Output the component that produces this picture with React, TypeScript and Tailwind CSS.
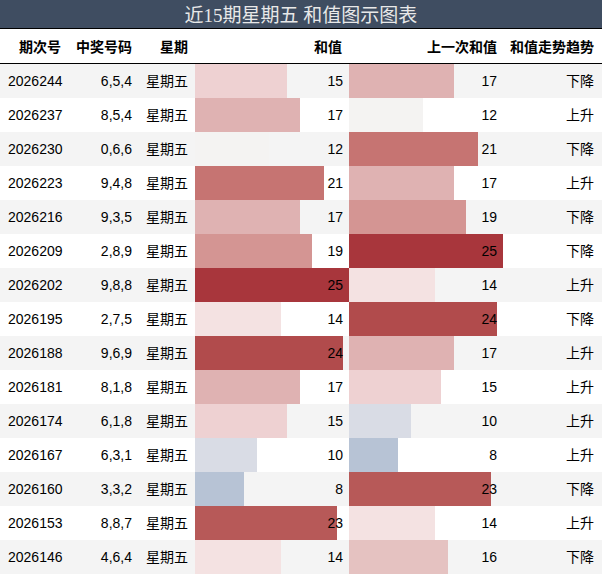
type Row = {
  issue: string;
  nums: string;
  sum: number;
  prev: number;
  trend: "上升" | "下降";
};

const ROWS: Row[] = [
  { issue: "2026244", nums: "6,5,4", sum: 15, prev: 17, trend: "下降" },
  { issue: "2026237", nums: "8,5,4", sum: 17, prev: 12, trend: "上升" },
  { issue: "2026230", nums: "0,6,6", sum: 12, prev: 21, trend: "下降" },
  { issue: "2026223", nums: "9,4,8", sum: 21, prev: 17, trend: "上升" },
  { issue: "2026216", nums: "9,3,5", sum: 17, prev: 19, trend: "下降" },
  { issue: "2026209", nums: "2,8,9", sum: 19, prev: 25, trend: "下降" },
  { issue: "2026202", nums: "9,8,8", sum: 25, prev: 14, trend: "上升" },
  { issue: "2026195", nums: "2,7,5", sum: 14, prev: 24, trend: "下降" },
  { issue: "2026188", nums: "9,6,9", sum: 24, prev: 17, trend: "上升" },
  { issue: "2026181", nums: "8,1,8", sum: 17, prev: 15, trend: "上升" },
  { issue: "2026174", nums: "6,1,8", sum: 15, prev: 10, trend: "上升" },
  { issue: "2026167", nums: "6,3,1", sum: 10, prev: 8, trend: "上升" },
  { issue: "2026160", nums: "3,3,2", sum: 8, prev: 23, trend: "下降" },
  { issue: "2026153", nums: "8,8,7", sum: 23, prev: 14, trend: "上升" },
  { issue: "2026146", nums: "4,6,4", sum: 14, prev: 16, trend: "下降" },
];

// colour scale per value (blue-ish low, red high)
const BAR_COLOR: Record<number, string> = {
  8: "bg-[#b7c3d5]",
  10: "bg-[#d9dce5]",
  12: "bg-[#f4f3f2]",
  14: "bg-[#f4e2e2]",
  15: "bg-[#eed1d2]",
  16: "bg-[#e5c2c1]",
  17: "bg-[#dfb2b2]",
  19: "bg-[#d49593]",
  21: "bg-[#c67472]",
  23: "bg-[#b75958]",
  24: "bg-[#b14b4c]",
  25: "bg-[#a8363c]",
};

const MAX = 25;
const GRID = "grid grid-cols-[69px_70px_56px_154px_154px_99px]";

function BarCell({ value }: { value: number }) {
  return (
    <div className="relative flex items-center justify-end pr-[6px]">
      <div
        className={`absolute inset-y-0 left-0 ${BAR_COLOR[value]}`}
        style={{ width: `${(value / MAX) * 100}%` }}
      />
      <span className="relative">{value}</span>
    </div>
  );
}

export default function App() {
  return (
    <div
      className="w-[602px] h-[576px] bg-white text-[14px] text-black overflow-hidden"
      style={{ fontFamily: '"Liberation Sans", "Noto Sans CJK SC", sans-serif' }}
    >
      <div
        className="h-[29px] pt-[4px] bg-[#3f4d61] border-b border-black flex items-center justify-center text-[19px] text-[#e8e8e8]"
        style={{ fontFamily: '"Liberation Serif", "Noto Sans CJK SC", serif' }}
      >
        近15期星期五 和值图示图表
      </div>

      <div className={`${GRID} h-[35px] pt-[2px] border-b border-black font-bold`}>
        <div className="flex items-center justify-end pr-2">期次号</div>
        <div className="flex items-center justify-end pr-[7px]">中奖号码</div>
        <div className="flex items-center justify-end pr-[7px]">星期</div>
        <div className="flex items-center justify-end pr-[7px]">和值</div>
        <div className="flex items-center justify-end pr-[6px]">上一次和值</div>
        <div className="flex items-center justify-end pr-2">和值走势趋势</div>
      </div>

      {ROWS.map((r, i) => (
        <div
          key={r.issue}
          className={`${GRID} h-[34px] ${i % 2 === 0 ? "bg-[#f4f4f4]" : "bg-white"}`}
        >
          <div className="flex items-center pl-2">{r.issue}</div>
          <div className="flex items-center justify-end pr-[7px]">{r.nums}</div>
          <div className="flex items-center justify-end pr-[7px]">星期五</div>
          <BarCell value={r.sum} />
          <BarCell value={r.prev} />
          <div className="flex items-center justify-end pr-2">{r.trend}</div>
        </div>
      ))}
    </div>
  );
}
